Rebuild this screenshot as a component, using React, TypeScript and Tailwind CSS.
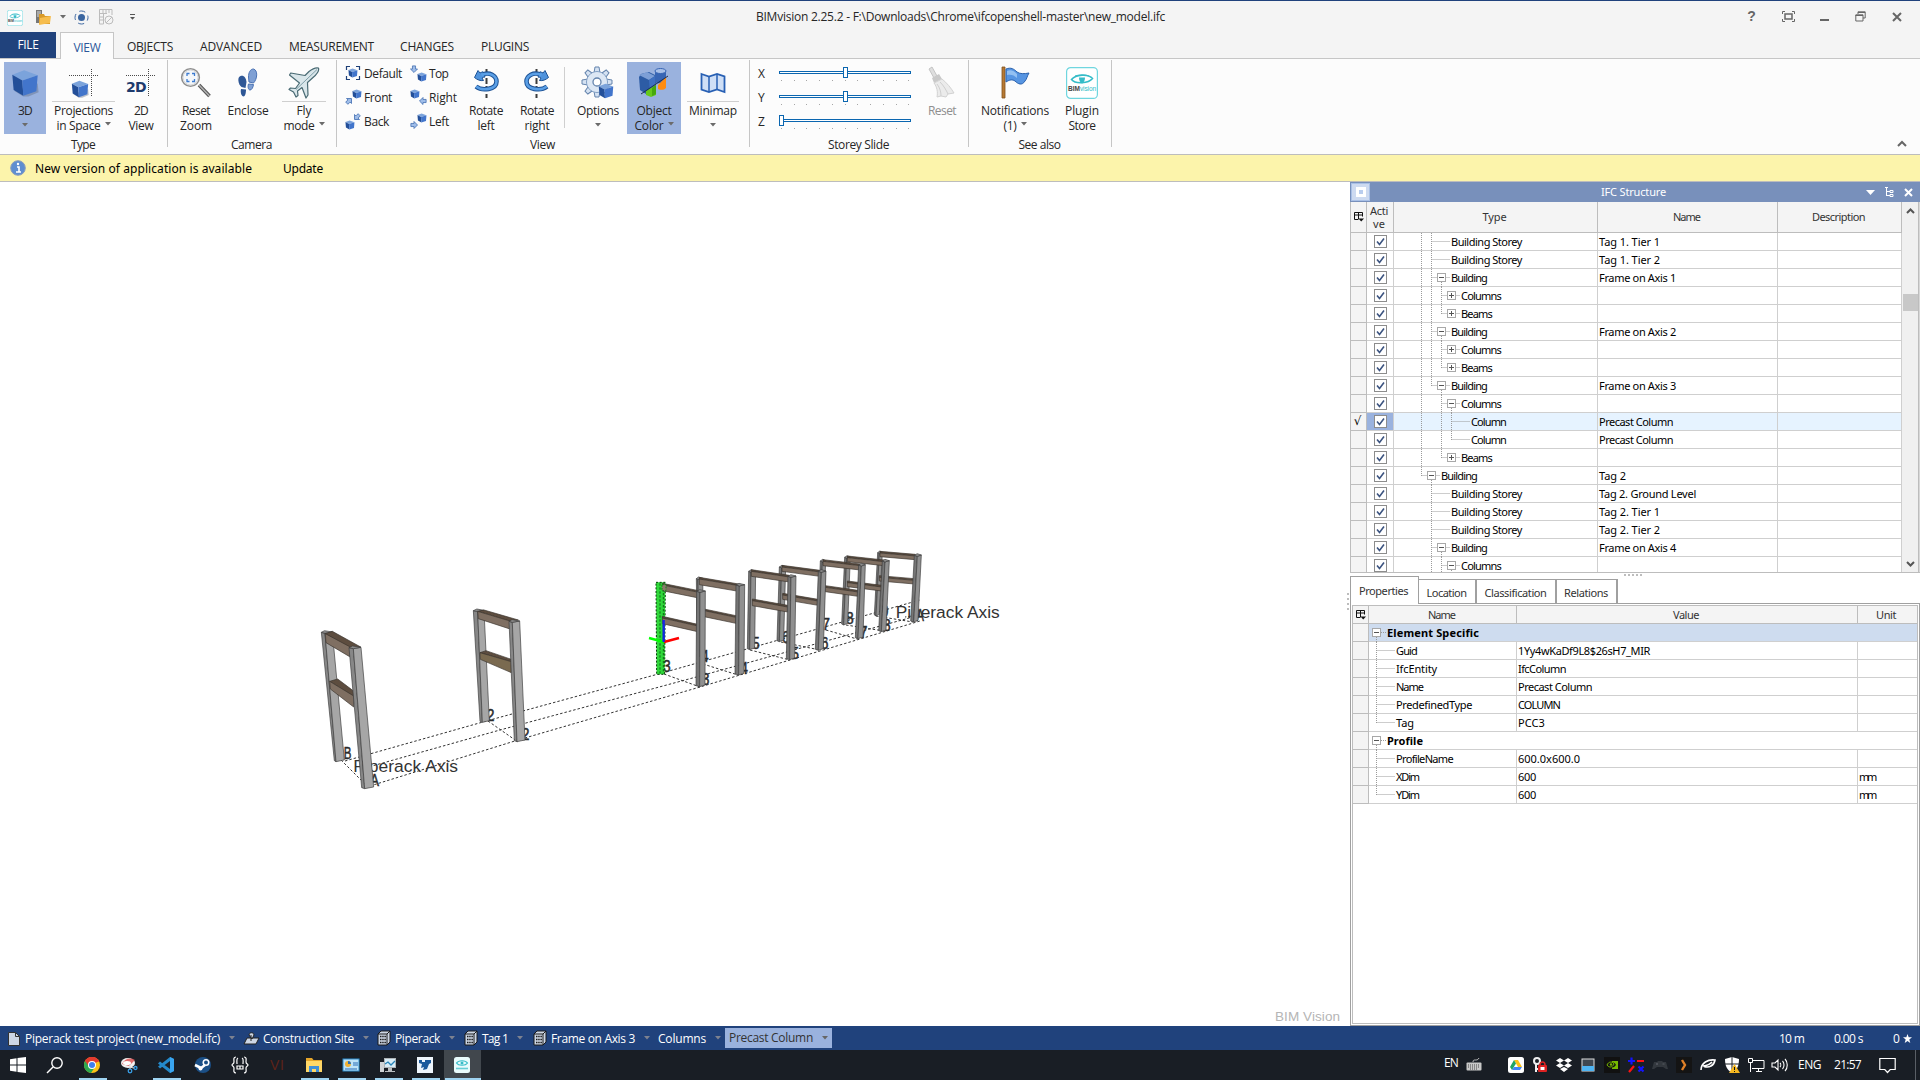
import { useLayoutEffect, useRef, useState } from 'react';
import type { ReactNode } from 'react';

/** Text run that adjusts its tracking to fill a known width. */
function T({ w, children, className = '' }: { w: number; children: string; className?: string }) {
  const ref = useRef<HTMLSpanElement>(null);
  const [ls, setLs] = useState(0);
  useLayoutEffect(() => {
    const el = ref.current;
    if (el) setLs((w - el.getBoundingClientRect().width) / children.length);
  }, []);
  return (
    <span ref={ref} className={'inline-block whitespace-pre ' + className} style={{ letterSpacing: ls }}>
      {children}
    </span>
  );
}

const Arrow = ({ className = 'text-[#6b6b6b]' }: { className?: string }) => (
  <svg width="6" height="4" viewBox="0 0 6 4" className={'shrink-0 ' + className}>
    <path d="M0 0h6L3 3.6z" fill="currentColor" />
  </svg>
);

const CubeFaces = () => (
  <>
    <path d="M1.500 6.500L15 1.500l15.500 5.500L13 13z" fill="#7ba3db" />
    <path d="M1.500 6.500L13 13l1 17.500L3 24z" fill="#234f99" />
    <path d="M13 13l17.500-6L29 25.500l-15 5z" fill="#4275cb" />
  </>
);

function Cube({ s = 16, className = '' }: { s?: number; className?: string }) {
  return (
    <svg width={s} height={s} viewBox="0 0 32 32" className={'shrink-0 ' + className}>
      <path d="M4 25l10 6.500h6l11.500-5-1-10z" fill="#5b6780" opacity=".4" />
      <CubeFaces />
    </svg>
  );
}

const Dotted = ({ children }: { children: ReactNode }) => (
  <div className="relative h-8 w-[32px]">
    <svg width="32" height="32" className="absolute inset-0">
      <path d="M1 8.500h30M23.500 2v28" stroke="#4a4a4a" strokeDasharray="1 1" />
    </svg>
    {children}
  </div>
);

function Btn({
  w, icon, a, aw, b, bw, arrow, ml = 'ml-0', active, line, dim,
}: {
  w: string; icon: ReactNode; a: string; aw: number; b?: string; bw?: number; arrow?: boolean; ml?: string;
  active?: boolean; line?: boolean; dim?: boolean;
}) {
  return (
    <div className={`relative flex h-[72px] shrink-0 flex-col items-center pt-[5px] ${w} ${ml} ${active ? 'bg-[#9ab2de]' : ''}`}>
      <div className="flex h-8 items-center justify-center">{icon}</div>
      {line && <div className="absolute top-[39px] h-px w-full bg-[#cfcfcf]" />}
      <div className={`mt-1 h-[15px] leading-[15px] ${dim ? 'text-[#8f8f8f]' : ''}`}><T w={aw}>{a}</T></div>
      <div className="flex h-[15px] items-center gap-[4px] leading-[15px]">
        {b && <T w={bw || 20}>{b}</T>}
        {arrow && <Arrow className={b ? 'mb-[3px] text-[#6b6b6b]' : 'mb-[2px] text-[#6b6b6b]'} />}
      </div>
    </div>
  );
}

function Group({ w, label, lw, children }: { w: string; label: string; lw: number; children: ReactNode }) {
  return (
    <div className={`relative flex h-[95px] shrink-0 flex-col ${w}`}>
      <div className="flex h-[76px] pt-[3px]">{children}</div>
      <div className="mt-[3px] flex justify-center pr-[2px] leading-[14px]"><T w={lw}>{label}</T></div>
      <div className="absolute right-0 top-[1px] h-[87px] w-px bg-[#c6c6c6]" />
    </div>
  );
}

const downArrow = 'M-2-4h4v4h2.500L0 4.500-4.500 0H-2z';

function ViewIcon({ k }: { k: string }) {
  const cubeAt: Record<string, [number, number]> = {
    Default: [3, 3], Front: [7, 0], Back: [0, 7], Top: [7, 7], Right: [0, 0], Left: [7, 0],
  };
  const arrowAt: Record<string, [number, number, number]> = {
    Front: [4, 12, 225], Back: [12, 4, 45], Top: [4, 4, 0], Right: [13, 12, 90], Left: [4, 12, -90],
  };
  const [x, y] = cubeAt[k];
  const ar = arrowAt[k];
  return (
    <svg width="18" height="18" viewBox="0 0 18 18" className="shrink-0">
      <g transform={`translate(${x} ${y}) scale(.31)`}><CubeFaces /></g>
      {k === 'Default' && (
        <path d="M1.500 5V1.500H5M11 1.500h3.500V5M14.500 11v3.500H11M5 14.500H1.500V11" fill="none" stroke="#1d3f77" strokeWidth="1.200" />
      )}
      {ar && (
        <path d={downArrow} transform={`translate(${ar[0]} ${ar[1]}) rotate(${ar[2]}) scale(.78)`} fill="#9fbde9" stroke="#3f6cb0" />
      )}
    </svg>
  );
}

const Small = ({ k, w }: { k: string; w: number }) => (
  <div className="flex h-6 items-center gap-px"><ViewIcon k={k} /><T w={w}>{k}</T></div>
);

const Rotate = ({ flip }: { flip?: boolean }) => (
  <svg width="32" height="32" viewBox="0 0 32 32" className={flip ? '-scale-x-100' : ''}>
    <path d="M16.500 2v5M16.500 11v6M16.500 19v2M16.500 27v4" stroke="#3c3c3c" strokeWidth="2" />
    <path d="M11 8C20 4 26.500 9 26.500 14.500c0 8-14 10-20.500 5" fill="none" stroke="#1d5295" strokeWidth="4.600" />
    <path d="M4.500 10.500L8 3.500l2 2.500c1-.5 2-1 3-1.200l2 5.200c-1 0-2 .5-3 1l1.500 2.500c-3 .5-6-.5-9-3z" fill="#4f93dd" stroke="#1d5295" strokeLinejoin="round" />
    <path d="M11.500 8C20 4.500 26.500 9 26.500 14.500c0 8-14 10-20.300 5" fill="none" stroke="#5a9fe6" strokeWidth="2.600" />
  </svg>
);

const gearTeeth = [0, 45, 90, 135, 180, 225, 270, 315];

const icons = {
  zoom: (
    <svg width="34" height="34" viewBox="0 0 34 34">
      <path d="M20 19l10.500 11" stroke="#565656" strokeWidth="3.600" />
      <path d="M20 19l10.500 11" stroke="#b4b4b4" strokeWidth="1.400" />
      <circle cx="11.500" cy="11.500" r="8.800" fill="#f4f7fa" stroke="#8f8f8f" strokeWidth="1.600" />
      <circle cx="11.500" cy="11.500" r="7.500" fill="none" stroke="#d5d5d5" />
      <path d="M8 10V7.500h2.500M13 7.500h2.500V10M15.500 13v2.500H13M10.500 15.500H8V13" fill="none" stroke="#3d7bd0" strokeWidth="1.300" />
    </svg>
  ),
  feet: (
    <svg width="22" height="32" viewBox="0 0 22 32">
      <path d="M3.500 9C7 8 9 11 9.500 15l-1 6-4-1C1 17 0 10 3.500 9z" fill="#2e5796" />
      <path d="M4 22l5 .5c0 4-1 7-2.500 7S3 26.500 4 22z" fill="#2e5796" />
      <path d="M16.500 2c-3.500 0-5 4-5 8l.5 5 4.500 1c4-4 4.500-13 0-14z" fill="#7fa0d4" stroke="#4a72b4" />
      <path d="M16.500 17.500l-5-.5c-1 3 0 6 1.500 6s3-2 3.500-5.500z" fill="#7fa0d4" stroke="#4a72b4" />
    </svg>
  ),
  plane: (
    <svg width="32" height="32" viewBox="0 0 32 32">
      <path d="M30.500 1c.8 2.500-1.500 6-5.500 9.500l-5.500 5 .5 12.500-2 3-4-10.500L9.500 24l.5 4.500-2 1.500-2.500-5L1 22.500 2.500 21l5 .5 4-5.500L1.500 8l1.200-2L17 8.500l4-4C24 2 28 .5 30.500 1z" fill="#d9e6ea" stroke="#4a6b74" strokeWidth="1.200" strokeLinejoin="round" />
      <path d="M29 2.500L8 22.500" stroke="#7f9ea8" />
    </svg>
  ),
  gear: (
    <svg width="34" height="34" viewBox="0 0 34 34">
      <g transform="translate(16 16)">
        {gearTeeth.map((a) => (
          <path key={a} d="M-3-9l1-6h4L3-9z" transform={`rotate(${a})`} fill="#d5e2f2" stroke="#6484ad" />
        ))}
        <circle r="10.500" fill="#d9e5f3" stroke="#7f9dc2" />
        <circle r="9.800" fill="#dce7f4" />
        <circle r="4" fill="#fff" stroke="#6484ad" strokeWidth="1.300" />
      </g>
      <g transform="translate(17 17) scale(.5)"><CubeFaces /></g>
    </svg>
  ),
  objColor: (
    <svg width="32" height="34" viewBox="0 0 32 34">
      <path d="M1 11l2-3 8-2 8 4-2 13-9 5-6-4z" fill="#2d5ca5" />
      <path d="M1 9l8-3 8 4-6 4z" fill="#7d9fd6" />
      <path d="M11 14l6-4v13l-5 4z" fill="#3e70c0" />
      <path d="M17 5v11c2 2 9 2 11-3V5z" fill="#3765b4" />
      <path d="M28 11l-8 8v4c3 1.500 6 1 8-1z" fill="#ff8c10" />
      <ellipse cx="22.500" cy="5" rx="5.500" ry="2.500" fill="#a8c0e8" stroke="#3765b4" />
      <path d="M8 25l10-6v10l-5 2-5-2z" fill="#66c81a" />
      <path d="M14 22l4-3v9l-4 2z" fill="#46a80c" />
      <path d="M3 28L30 10" stroke="#1d2f4f" />
    </svg>
  ),
  map: (
    <svg width="26" height="26" viewBox="0 0 26 26">
      <path d="M1.500 4l7.500 2.500L17 4l7.500 2.500V22L17 19.500 9 22l-7.500-2.500z" fill="#cfdff6" stroke="#2860b4" strokeWidth="1.800" />
      <path d="M9 6.500V22M17 4v15.500" stroke="#2860b4" strokeWidth="1.500" />
    </svg>
  ),
  broom: (
    <svg width="32" height="34" viewBox="0 0 32 34">
      <path d="M3 3l3-2 5 9-3 2z" fill="#dedede" stroke="#c4c4c4" />
      <path d="M6 12l7-4 3 5-8 4z" fill="#c9c9c9" />
      <path d="M8 17l8-4c5 4 9 9 12 14l-6 1-2 3-5-1-4 1c1-5 0-10-3-14z" fill="#ebebeb" stroke="#d2d2d2" />
      <path d="M11 18c3 4 4 8 4 12M14 16c4 4 6 8 8 12" fill="none" stroke="#cfcfcf" />
    </svg>
  ),
  flag: (
    <svg width="32" height="34" viewBox="0 0 32 34">
      <path d="M3 1h3v31H3z" fill="#b77a34" stroke="#80501c" strokeWidth=".8" />
      <path d="M7 3c5-2 8 0 11 3 3 2 7 2 12 1-2 3-2 6-4 8-3 5-7 3-10 0-3-2-6-1-9 1z" fill="#5795e2" stroke="#2b62ad" />
      <path d="M8 5c4-2 7 0 10 3v4c-3-3-6-4-10-3z" fill="#93c0f2" />
    </svg>
  ),
};

function Logo({ s }: { s: number }) {
  return (
    <svg width={s} height={s} viewBox="0 0 32 32" className="shrink-0">
      <rect x=".6" y=".6" width="30.800" height="30.800" rx="4" fill="#fff" stroke="#6fd6df" strokeWidth="1.200" />
      <path d="M5.500 12.500c4-5 17-6 21-1-4 5-17 6-21 1z" fill="none" stroke="#35bcc8" strokeWidth="1.600" />
      <path d="M9 9c4-1.500 10-1.500 14 0" fill="none" stroke="#35bcc8" />
      <path d="M13 10.500h6c0 3-1 5-3 6-2-1-3-3-3-6z" fill="#35bcc8" />
      <text x="2" y="24" fontSize="6.500" fontWeight="700" fontFamily="Liberation Sans, sans-serif" textLength="12" fill="#444">BIM</text>
      <text x="14" y="24" fontSize="6.500" fontFamily="Liberation Sans, sans-serif" textLength="16" fill="#35bcc8">vision</text>
    </svg>
  );
}

const ticks = [2, 15, 27, 40, 53, 66, 78, 91, 104, 117, 129];

function Slider({ label, pos }: { label: string; pos: number }) {
  return (
    <div className="flex h-6 items-center">
      <span className="w-[21px]">{label}</span>
      <svg width="132" height="20" viewBox="0 0 132 20">
        <rect x=".5" y="7.500" width="131" height="2" fill="#fff" stroke="#0b66b0" />
        <rect x={pos + 0.5} y="3.500" width="4" height="10" fill="#fff" stroke="#0b66b0" />
        {ticks.map((t) => <rect key={t} x={t} y="16" width="1" height="1" fill="#a6a6a6" />)}
      </svg>
    </div>
  );
}

function TitleBar() {
  return (
    <div className="relative flex h-[32px] items-center border-t border-[#20427c]">
      <div className="ml-[7px] mt-[2px]"><Logo s={16} /></div>
      <svg width="17" height="17" viewBox="0 0 17 17" className="ml-[12px] mt-px">
        <path d="M1 1h6v13H1z" fill="#777" /><path d="M2 3h4M2 5h4M2 7h4" stroke="#ddd" />
        <path d="M4 5h5l1 2h5v8H4z" fill="#d99a28" /><path d="M5 9l11-2-1 7-11 2z" fill="#f6bd4e" />
      </svg>
      <span className="ml-[8px]"><Arrow /></span>
      <svg width="15" height="15" viewBox="0 0 15 15" className="ml-[8px] mt-px">
        <circle cx="7.500" cy="7.500" r="3.500" fill="#3a65a0" />
        <circle cx="7.500" cy="7.500" r="6.500" fill="none" stroke="#3a65a0" strokeDasharray="6.200 4" strokeDashoffset="3" />
      </svg>
      <svg width="15" height="16" viewBox="0 0 15 16" className="ml-[10px]" fill="none" stroke="#bcbcbc">
        <path d="M.5 15V.5H13V6M.5 4.500H8M4.500 5v10H.5M4 1v3M7 1v3M10 1v3M1 8h3M1 11h3" />
        <circle cx="10" cy="11" r="4" /><path d="M7 14l6-6" />
      </svg>
      <svg width="6" height="8" viewBox="0 0 6 8" className="ml-[16px]"><path d="M0 1.500h5" stroke="#555" /><path d="M0 4h5L2.500 6.800z" fill="#555" /></svg>
      <div className="absolute left-[756px] top-[7px] leading-[18px]"><T w={409}>BIMvision 2.25.2 - F:\Downloads\Chrome\ifcopenshell-master\new_model.ifc</T></div>
      <div className="ml-auto flex items-center pr-[18px] text-[#666]">
        <span className="w-[9px] text-center font-['Liberation_Sans',sans-serif] text-[14px] font-bold">?</span>
        <svg width="13" height="11" viewBox="0 0 13 11" className="ml-[26px]" fill="none" stroke="#666">
          <path d="M.5 3V.5H3M10 .5h2.500V3M12.500 8v2.500H10M3 10.500H.5V8" /><rect x="3" y="3" width="7" height="5" strokeWidth="1.500" />
        </svg>
        <span className="ml-[25px] mt-[6px] h-[2px] w-[9px] bg-[#666]" />
        <svg width="11" height="11" viewBox="0 0 11 11" className="ml-[26px]" fill="none" stroke="#666">
          <path d="M3 3V.8h7.200V7H8M3 1.500h7" /><path d="M.8 3.800H8V10H.8zM.5 4.500H8" />
        </svg>
        <svg width="10" height="10" viewBox="0 0 10 10" className="ml-[26px]"><path d="M1 1l8 8M9 1L1 9" stroke="#666" strokeWidth="2" /></svg>
      </div>
    </div>
  );
}

function Tabs() {
  return (
    <div className="flex h-[27px] items-end border-b border-[#c6c6c6] pt-px leading-[22px]">
      <div className="flex h-[26px] w-[56px] justify-center bg-[#20427c] pt-px leading-[24px] text-white"><T w={21}>FILE</T></div>
      <div className="-mb-px ml-1 flex h-[27px] w-[54px] justify-center border border-b-0 border-[#c6c6c6] bg-[#fcfcfc] pt-[4px] text-[#2b579a]"><T w={27}>VIEW</T></div>
      <T w={46} className="ml-[13px]">OBJECTS</T>
      <T w={62} className="ml-[27px]">ADVANCED</T>
      <T w={85} className="ml-[27px]">MEASUREMENT</T>
      <T w={54} className="ml-[26px]">CHANGES</T>
      <T w={48} className="ml-[27px]">PLUGINS</T>
    </div>
  );
}

function Ribbon() {
  return (
    <div className="relative flex h-[95px] bg-[#fcfcfc]">
      <Group w="w-[168px]" label="Type" lw={24}>
        <Btn ml="ml-1" w="w-[42px]" active arrow icon={<Cube s={28} />} a="3D" aw={14} />
        <Btn ml="ml-[6px]" w="w-[63px]" line arrow a="Projections" aw={59} b="in Space" bw={44}
          icon={<Dotted><Cube s={18} className="absolute left-[3px] top-[13px]" /></Dotted>} />
        <Btn ml="ml-[3px]" w="w-[46px]" a="2D" aw={14} b="View" bw={25}
          icon={<Dotted><span className="absolute left-[1px] top-[11px] font-['DejaVu_Sans',sans-serif] text-[14px] font-bold leading-[18px] text-[#1d3a6d]"><T w={20}>2D</T></span></Dotted>} />
      </Group>
      <Group w="w-[169px]" label="Camera" lw={41}>
        <Btn ml="ml-[3px]" w="w-[50px]" icon={icons.zoom} a="Reset" aw={28} b="Zoom" bw={32} />
        <Btn ml="ml-px" w="w-[52px]" icon={icons.feet} a="Enclose" aw={41} />
        <Btn ml="ml-[8px]" w="w-[44px]" line icon={icons.plane} a="Fly" aw={15} b="mode" bw={31} arrow />
      </Group>
      <Group w="w-[413px]" label="View" lw={25}>
        <div className="ml-[8px] w-[64px]"><Small k="Default" w={38} /><Small k="Front" w={28} /><Small k="Back" w={25} /></div>
        <div className="ml-[1px] w-[52px]"><Small k="Top" w={19} /><Small k="Right" w={28} /><Small k="Left" w={20} /></div>
        <Btn w="w-[48px]" icon={<Rotate />} a="Rotate" aw={34} b="left" bw={17} />
        <Btn ml="ml-[3px]" w="w-[48px]" icon={<Rotate flip />} a="Rotate" aw={34} b="right" bw={25} />
        <div className="ml-[3px] mt-[5px] h-[61px] w-px bg-[#cfcfcf]" />
        <Btn ml="ml-[5px]" w="w-[56px]" icon={icons.gear} a="Options" aw={42} arrow />
        <Btn ml="ml-px" w="w-[54px]" active icon={icons.objColor} a="Object" aw={35} b="Color" bw={29} arrow />
        <Btn ml="ml-[6px]" w="w-[52px]" line icon={icons.map} a="Minimap" aw={48} arrow />
      </Group>
      <Group w="w-[219px]" label="Storey Slide" lw={61}>
        <div className="ml-[8px]"><Slider label="X" pos={64} /><Slider label="Y" pos={64} /><Slider label="Z" pos={0} /></div>
        <Btn ml="ml-[9px]" w="w-[44px]" dim icon={icons.broom} a="Reset" aw={28} />
      </Group>
      <Group w="w-[143px]" label="See also" lw={42}>
        <Btn ml="ml-[8px]" w="w-[76px]" icon={icons.flag} a="Notifications" aw={68} b="(1)" bw={13} arrow />
        <Btn ml="ml-[9px]" w="w-[40px]" icon={<Logo s={32} />} a="Plugin" aw={34} b="Store" bw={27} />
      </Group>
      <svg width="10" height="7" viewBox="0 0 10 7" className="absolute bottom-[7px] right-[13px]"><path d="M1 6l4-4 4 4" fill="none" stroke="#666" strokeWidth="2" /></svg>
    </div>
  );
}

/* ---------- 3D view ---------- */

type ColumnDef = { t: [number, number, number]; y: number; b: [number, number, number]; by: number; light?: boolean };

/** Column with a shaded side (left) and a face (right). */
function Column({ t, y, b, by, light }: ColumnDef) {
  return (
    <g stroke="#3c3c3c" strokeWidth="2" strokeLinejoin="round">
      <path d={`M${t[0]} ${y + 3}L${t[1]} ${y + 6}L${b[1]} ${by}L${b[0]} ${by - 3}z`} fill={light ? '#878787' : '#757575'} />
      <path d={`M${t[1]} ${y + 6}L${t[2]} ${y + 2}L${b[2]} ${by - 5}L${b[1]} ${by}z`} fill={light ? '#a6a6a6' : '#909090'} />
      <path d={`M${t[0]} ${y + 3}L${(t[0] + t[1]) / 2 + 4} ${y - 2}L${t[2]} ${y + 2}L${t[1]} ${y + 6}z`} fill="#8d8d8d" />
    </g>
  );
}

function Beam({ x1, y1, x2, y2, h, lip = 5 }: { x1: number; y1: number; x2: number; y2: number; h: number; lip?: number }) {
  return (
    <g stroke="#3a342e" strokeWidth="2" strokeLinejoin="round">
      <path d={`M${x1} ${y1}L${x2} ${y2}L${x2} ${y2 + lip}L${x1} ${y1 + lip}z`} fill="#5d4d3f" />
      <path d={`M${x1} ${y1 + lip}L${x2} ${y2 + lip}L${x2} ${y2 + h}L${x1} ${y1 + h}z`} fill="#7f6f62" />
    </g>
  );
}

const Num = ({ x, y, children }: { x: number; y: number; children: string }) => (
  <text x={x} y={y} fontSize="48" fill="#2b2b2b" stroke="#2b2b2b" strokeWidth="1.500" textLength="23" lengthAdjust="spacingAndGlyphs">{children}</text>
);

function Scene() {
  return (
    <svg width="1350" height="844" viewBox="0 182 1350 844" fontFamily="Liberation Sans, sans-serif">
      <g fill="none" stroke="#333" strokeWidth="1" strokeDasharray="2.500 2">
        <path d="M345 761L490 720L662 673L920 600" />
        <path d="M365 768L500 730L700 676L920 615L905 617" />
        <path d="M370 786L518 740L700 687L920 621" />
        <path d="M341 760L367 786M488 721L518 742M664 674L700 687M703 664L738 675M750 650L790 660M781 642L820 650M826 630L857 639M846 625L884 631M876 616L913 622" />
      </g>
      <g transform="translate(300 580) scale(.33333)">
        <Num x={131} y={538}>B</Num>
        <text x="160" y="577" fontSize="51" fill="#333" textLength="314" lengthAdjust="spacingAndGlyphs">Piperack Axis</text>
        <text x="210" y="619" fontSize="50" fill="#2b2b2b" stroke="#2b2b2b" strokeWidth="1.500" textLength="27" lengthAdjust="spacingAndGlyphs">A</text>
        <Num x={560} y={423}>2</Num>
        <Num x={665} y={481}>2</Num>
        <Column t={[64, 75, 97]} y={154} b={[103, 108, 133]} by={545} light />
        <path d="M76 161L97 154L182 201L148 205z" fill="#5d4d3f" stroke="#3a342e" strokeWidth="2" />
        <path d="M76 161L149 200V230L78 188z" fill="#7f6f62" stroke="#3a342e" strokeWidth="2" />
        <path d="M89 304L113 297L162 334V350z" fill="#5d4d3f" stroke="#3a342e" strokeWidth="2" />
        <path d="M89 304L161 348V381L91 327z" fill="#7f6f62" stroke="#3a342e" strokeWidth="2" />
        <Column t={[147, 160, 183]} y={200} b={[185, 194, 221]} by={626} light />
        <Column t={[520, 533, 552]} y={89} b={[540, 547, 568]} by={427} light />
        <path d="M533 94L552 90L655 120L630 124z" fill="#5d4d3f" stroke="#3a342e" strokeWidth="2" />
        <path d="M533 94L630 123V147L535 116z" fill="#7f6f62" stroke="#3a342e" strokeWidth="2" />
        <path d="M540 218L558 212L634 238V246z" fill="#5d4d3f" stroke="#3a342e" strokeWidth="2" />
        <path d="M540 218L634 245V278L541 238z" fill="#7a6a50" stroke="#3a342e" strokeWidth="2" />
        <Column t={[627, 637, 659]} y={121} b={[643, 651, 675]} by={485} light />
      </g>
      <g transform="translate(630 530) scale(.33333)">
        <Num x={99} y={427}>3</Num><Num x={215} y={466}>3</Num>
        <Num x={213} y={396}>4</Num><Num x={331} y={431}>4</Num>
        <Num x={366} y={357}>5</Num><Num x={484} y={386}>5</Num>
        <Num x={456} y={338}>6</Num><Num x={572} y={358}>6</Num>
        <Num x={577} y={300}>7</Num><Num x={689} y={323}>7</Num>
        <Num x={648} y={282}>8</Num><Num x={759} y={302}>8</Num>
        <Num x={752} y={262}>9</Num><Num x={859} y={274}>A</Num>
        <text x="797" y="265" fontSize="51" fill="#333" textLength="312" lengthAdjust="spacingAndGlyphs">Piperack Axis</text>
        <Column t={[743, 748, 757]} y={65} b={[733, 738, 748]} by={258} />
        <Beam x1={750} y1={64} x2={856} y2={73} h={16} />
        <Beam x1={748} y1={137} x2={853} y2={146} h={16} />
        <Column t={[853, 862, 874]} y={73} b={[842, 851, 864]} by={276} />
        <Column t={[644, 650, 661]} y={79} b={[635, 641, 653]} by={285} />
        <Beam x1={652} y1={78} x2={762} y2={90} h={17} />
        <Beam x1={652} y1={153} x2={755} y2={166} h={17} />
        <Column t={[757, 765, 778]} y={90} b={[746, 754, 768]} by={305} />
        <Column t={[571, 577, 587]} y={90} b={[563, 570, 580]} by={304} />
        <Beam x1={579} y1={89} x2={690} y2={102} h={18} />
        <Beam x1={586} y1={167} x2={684} y2={181} h={18} />
        <Column t={[686, 694, 706]} y={102} b={[676, 684, 699]} by={326} />
        <Column t={[448, 455, 467]} y={108} b={[441, 448, 461]} by={335} />
        <Beam x1={456} y1={106} x2={570} y2={121} h={18} />
        <Beam x1={458} y1={190} x2={564} y2={208} h={18} />
        <Column t={[565, 574, 588]} y={121} b={[556, 565, 580]} by={361} />
        <Column t={[356, 363, 377]} y={121} b={[352, 359, 374]} by={359} />
        <Beam x1={364} y1={119} x2={478} y2={136} h={20} />
        <Beam x1={367} y1={207} x2={473} y2={226} h={20} />
        <Column t={[474, 483, 498]} y={136} b={[469, 479, 494]} by={389} />
        <Column t={[199, 204, 218]} y={143} b={[202, 208, 222]} by={380} />
        <Beam x1={208} y1={142} x2={326} y2={162} h={22} />
        <Beam x1={222} y1={237} x2={318} y2={257} h={23} />
        <Column t={[318, 328, 344]} y={162} b={[315, 326, 342]} by={435} />
        <path d="M78 157h28l-2 276H80z" fill="#2fd83a" stroke="#063f0a" strokeWidth="3" strokeDasharray="6 5" />
        <path d="M90 160v270M100 165v265" stroke="#0b6612" strokeWidth="3" strokeDasharray="7 5" />
        <Beam x1={97} y1={160} x2={206} y2={182} h={22} />
        <Beam x1={97} y1={259} x2={203} y2={283} h={22} />
        <path d="M96 164h12v18H96z" fill="#8b7a6c" stroke="#0b8a14" strokeWidth="3" strokeDasharray="5 4" />
        <Column t={[200, 210, 226]} y={181} b={[198, 209, 225]} by={470} />
        <path d="M57 324l45 12" stroke="#0f0" strokeWidth="7" />
        <path d="M102 336l45-12" stroke="#f00" strokeWidth="8" />
        <path d="M101 336V270" stroke="#1425e6" strokeWidth="7" />
      </g>
      <text x="1275" y="1021" fontSize="13.500" fill="#b5b5b5" textLength="65">BIM Vision</text>
    </svg>
  );
}

/* ---------- Side panels ---------- */

type Row = { l: number; t: string; w: number; n?: string; nw?: number; box?: '+' | '-'; v: number[]; end?: boolean; sel?: boolean };

const S = { t: 'Building Storey', w: 71 };
const B = { t: 'Building', w: 36 };
const C = { t: 'Columns', w: 40 };
const M = { t: 'Beams', w: 31 };
const rows: Row[] = [
  { l: 1, ...S, n: 'Tag 1. Tier 1', nw: 61, v: [0, 1] },
  { l: 1, ...S, n: 'Tag 1. Tier 2', nw: 61, v: [0, 1] },
  { l: 1, ...B, n: 'Frame on Axis 1', nw: 77, box: '-', v: [0, 1] },
  { l: 2, ...C, box: '+', v: [0, 1, 2] },
  { l: 2, ...M, box: '+', v: [0, 1], end: true },
  { l: 1, ...B, n: 'Frame on Axis 2', nw: 77, box: '-', v: [0, 1] },
  { l: 2, ...C, box: '+', v: [0, 1, 2] },
  { l: 2, ...M, box: '+', v: [0, 1], end: true },
  { l: 1, ...B, n: 'Frame on Axis 3', nw: 77, box: '-', v: [0], end: true },
  { l: 2, ...C, box: '-', v: [0, 2] },
  { l: 3, t: 'Column', w: 35, n: 'Precast Column', nw: 74, v: [0, 2, 3], sel: true },
  { l: 3, t: 'Column', w: 35, n: 'Precast Column', nw: 74, v: [0, 2], end: true },
  { l: 2, ...M, box: '+', v: [0], end: true },
  { l: 0, ...B, n: 'Tag 2', nw: 27, box: '-', v: [], end: true },
  { l: 1, ...S, n: 'Tag 2. Ground Level', nw: 97, v: [1] },
  { l: 1, ...S, n: 'Tag 2. Tier 1', nw: 61, v: [1] },
  { l: 1, ...S, n: 'Tag 2. Tier 2', nw: 61, v: [1] },
  { l: 1, ...B, n: 'Frame on Axis 4', nw: 77, box: '-', v: [1] },
  { l: 2, ...C, box: '-', v: [1, 2] },
];

const Box = ({ x, k }: { x: number; k: '+' | '-' }) => (
  <g stroke="#a8a8a8">
    <rect x={x - 4} y="4.500" width="8" height="8" fill="#fff" />
    <path d={k === '+' ? `M${x - 2.5} 8.500h5M${x} 6v5` : `M${x - 2.5} 8.500h5`} stroke="#555" />
  </g>
);

function Guides({ r }: { r: Row }) {
  const gx = (l: number) => 27.5 + 10 * l;
  return (
    <svg width={47 + 10 * r.l} height="18" className="shrink-0">
      <g stroke="#9a9a9a" strokeDasharray="1 1">
        {r.v.map((l) => <path key={l} d={`M${gx(l)} 0v18`} />)}
        {r.end && <path d={`M${gx(r.l)} 0v9`} />}
        <path d={`M${gx(r.l)} 8.500H${46 + 10 * r.l}`} />
        {r.box === '-' && <path d={`M${gx(r.l + 1)} 13v5`} />}
      </g>
      {r.box && <Box x={gx(r.l + 1)} k={r.box} />}
    </svg>
  );
}

const Check = () => (
  <svg width="13" height="13" viewBox="0 0 13 13">
    <rect x=".5" y=".5" width="12" height="12" fill="#fff" stroke="#8c8c8c" />
    <path d="M3 6.500l2.500 3L10 3.500" fill="none" stroke="#3c5480" strokeWidth="1.600" />
  </svg>
);

const GridIcon = () => (
  <svg width="10" height="10" viewBox="0 0 10 10">
    <path d="M4 7.500H.5v-7h8v4M.5 3h8M4.500 .5v7" fill="none" stroke="#111" /><path d="M4.500 6.500h5.500L7.200 9.500z" fill="#111" />
  </svg>
);

const hd = 'flex items-center justify-center border-r border-[#bdbdbd] pr-[2px]';

function Structure() {
  return (
    <div className="flex h-[391px] flex-col border-b border-[#bdbdbd]">
      <div className="flex h-[20px] shrink-0 items-center bg-[#7890bb] text-white">
        <div className="ml-px flex h-[18px] w-[19px] items-center justify-center border border-[#a9c0e6] bg-[#cddaf0]">
          <div className="h-[10px] w-[10px] border-[3px] border-white bg-[#b9cdee]" />
        </div>
        <div className="ml-[231px]"><T w={65}>IFC Structure</T></div>
        <svg width="9" height="5" viewBox="0 0 9 5" className="ml-auto"><path d="M0 0h9L4.500 5z" fill="#fff" /></svg>
        <svg width="9" height="10" viewBox="0 0 9 10" className="ml-[10px]" fill="none" stroke="#fff"><path d="M0 .5h3M1.500 1v8M1.500 4.500H5M1.500 8.500H5" /><path d="M5 3.500h3v2H5zM5 7.500h3v2H5z" /></svg>
        <svg width="9" height="9" viewBox="0 0 9 9" className="ml-[10px] mr-[7px]"><path d="M1 1l7 7M8 1L1 8" stroke="#fff" strokeWidth="2" /></svg>
      </div>
      <div className="flex min-h-0 flex-1">
        <div className="w-[552px] shrink-0 overflow-hidden border-l border-[#bdbdbd]">
          <div className="flex h-[31px] border-b border-[#bdbdbd] bg-[#f4f4f4] text-[#333]">
            <div className={hd + ' w-[16px] pl-[2px]'}><GridIcon /></div>
            <div className={hd + ' w-[27px] flex-col leading-[13px]'}><T w={18}>Acti</T><T w={12}>ve</T></div>
            <div className={hd + ' w-[204px]'}><T w={24}>Type</T></div>
            <div className={hd + ' w-[180px]'}><T w={27}>Name</T></div>
            <div className={hd + ' w-[124px]'}><T w={53}>Description</T></div>
          </div>
          {rows.map((r, i) => (
            <div key={i} className={`flex h-[18px] leading-[17px] ${r.sel ? 'bg-[#e6f3ff]' : 'bg-white'}`}>
              <div className="w-[16px] shrink-0 border-b border-r border-[#bdbdbd] bg-[#f4f4f4] pr-[2px] text-center font-['DejaVu_Sans',sans-serif] text-[12px]">{r.sel ? '√' : ''}</div>
              <div className={`flex w-[27px] shrink-0 items-center justify-center border-b border-r border-[#cfcfcf] ${r.sel ? 'bg-[#9ab2de]' : ''}`}><Check /></div>
              <div className="flex w-[204px] shrink-0 border-b border-r border-[#cfcfcf]"><Guides r={r} /><T w={r.w}>{r.t}</T></div>
              <div className="w-[180px] shrink-0 border-b border-r border-[#cfcfcf] pl-[1px]">{r.n && <T w={r.nw || 0}>{r.n}</T>}</div>
              <div className="w-[124px] shrink-0 border-b border-r border-[#cfcfcf]" />
            </div>
          ))}
        </div>
        <div className="flex w-[17px] flex-col items-center border-r border-[#bdbdbd] bg-[#f0f0f0] pb-[5px] pt-[6px]">
          <svg width="9" height="6" viewBox="0 0 9 6"><path d="M1 5l3.500-3.500L8 5" fill="none" stroke="#555" strokeWidth="2" /></svg>
          <div className="mt-[80px] h-[17px] w-[15px] bg-[#c8c8c8]" />
          <svg width="9" height="6" viewBox="0 0 9 6" className="mt-auto"><path d="M1 1l3.500 3.500L8 1" fill="none" stroke="#555" strokeWidth="2" /></svg>
        </div>
        <div className="w-px bg-[#d8d8d8]" />
      </div>
    </div>
  );
}

type Prop = { g?: string; t?: string; w: number; v?: string; vw?: number; u?: string; end?: boolean; hi?: boolean };
const props: Prop[] = [
  { g: 'Element Specific', w: 92, hi: true },
  { t: 'Guid', w: 21, v: '1Yy4wKaDf9L8$26sH7_MIR', vw: 132 },
  { t: 'IfcEntity', w: 41, v: 'IfcColumn', vw: 48 },
  { t: 'Name', w: 27, v: 'Precast Column', vw: 74 },
  { t: 'PredefinedType', w: 76, v: 'COLUMN', vw: 42 },
  { t: 'Tag', w: 18, v: 'PCC3', vw: 27, end: true },
  { g: 'Profile', w: 36 },
  { t: 'ProfileName', w: 57, v: '600.0x600.0', vw: 62 },
  { t: 'XDim', w: 23, v: '600', vw: 18, u: 'mm' },
  { t: 'YDim', w: 23, v: '600', vw: 18, u: 'mm', end: true },
];

function Properties() {
  const tab = 'flex h-[24px] items-center justify-center border-r-2 border-t border-[#a0a0a0] bg-white pr-px pt-[3px]';
  return (
    <div className="flex h-[450px] flex-col text-[#333]">
      <div className="flex h-[27px] shrink-0 items-end">
        <div className="relative z-10 -mb-px flex h-[28px] w-[69px] items-center justify-center border border-b-0 border-[#a0a0a0] bg-white pr-[2px] pt-[2px]"><T w={49}>Properties</T></div>
        <div className={tab + ' w-[58px]'}><T w={40}>Location</T></div>
        <div className={tab + ' w-[80px]'}><T w={62}>Classification</T></div>
        <div className={tab + ' w-[61px] border-r'}><T w={44}>Relations</T></div>
      </div>
      <div className="min-h-0 flex-1 border border-[#a0a0a0] bg-white p-px">
        <div className="h-full border border-[#bdbdbd] text-black">
          <div className="flex h-[18px] border-b border-[#bdbdbd] bg-[#f4f4f4] text-[#333]">
            <div className={hd + ' w-[16px] pl-[2px]'}><GridIcon /></div>
            <div className={hd + ' w-[148px] pt-px'}><T w={27}>Name</T></div>
            <div className={hd + ' w-[341px] pt-px'}><T w={26}>Value</T></div>
            <div className="flex flex-1 items-center justify-center pr-[3px] pt-px"><T w={20}>Unit</T></div>
          </div>
          {props.map((p, i) => (
            <div key={i} className={`flex h-[18px] leading-[17px] ${p.hi ? 'bg-[#cedcef]' : ''}`}>
              <div className="w-[16px] shrink-0 border-b border-r border-[#bdbdbd] bg-[#f4f4f4]" />
              {p.g ? (
                <div className="flex flex-1 border-b border-[#cfcfcf] font-bold">
                  <svg width="18" height="18" className="shrink-0">
                    <path d="M7.500 13v5M12 8.500h6" stroke="#9a9a9a" strokeDasharray="1 1" /><Box x={7.5} k="-" />
                  </svg>
                  <T w={p.w}>{p.g}</T>
                </div>
              ) : (
                <>
                  <div className="flex w-[148px] shrink-0 border-b border-r border-[#cfcfcf]">
                    <svg width="27" height="18" className="shrink-0"><path d={p.end ? 'M7.500 0v9M7.500 8.500H26' : 'M7.500 0v18M7.500 8.500H26'} fill="none" stroke="#9a9a9a" strokeDasharray="1 1" /></svg>
                    <T w={p.w}>{p.t || ''}</T>
                  </div>
                  <div className="w-[341px] shrink-0 border-b border-r border-[#cfcfcf] pl-[1px]"><T w={p.vw || 0}>{p.v || ''}</T></div>
                  <div className="flex-1 border-b border-[#cfcfcf] pl-[1px]">{p.u && <T w={16}>{p.u}</T>}</div>
                </>
              )}
            </div>
          ))}
        </div>
      </div>
    </div>
  );
}

/* ---------- Status bar and taskbar ---------- */

const Bld = ({ className }: { className: string }) => (
  <svg width="14" height="16" viewBox="0 0 14 16" className={'shrink-0 ' + className}>
    <path d="M1 4l3-3h9v11l-3 3H1z" fill="#cdd6e4" stroke="#1a1a1a" />
    <path d="M1 4h9v11M10 4l3-3" fill="none" stroke="#1a1a1a" />
    <path d="M3 6.500h6M3 9.500h6M3 12.500h6" stroke="#1a1a1a" strokeWidth="1.500" strokeDasharray="1.500 .7" />
  </svg>
);

const Crumb = ({ w, ml, children }: { w: number; ml: string; children: string }) => (
  <>
    <T w={w} className={ml + ' mt-px'}>{children}</T>
    <span className="ml-[9px]"><Arrow className="text-[#7d8290]" /></span>
  </>
);

function StatusBar() {
  return (
    <div className="flex h-[24px] shrink-0 items-center bg-[#20427c] text-[12px] leading-[18px] text-white">
      <svg width="12" height="14" viewBox="0 0 12 14" className="ml-[8px] mt-px"><path d="M.5.5h7l4 4v9H.5z" fill="#cdd6e4" stroke="#333" /><path d="M7.500.5v4h4" fill="none" stroke="#333" /></svg>
      <Crumb w={195} ml="ml-[5px]">Piperack test project (new_model.ifc)</Crumb>
      <svg width="17" height="14" viewBox="0 0 17 14" className="ml-[8px]"><path d="M4 7h12l-3 6H1z" fill="#cdd6e4" stroke="#222" /><path d="M8 10V4M6 4c0-3 5-3 5 0l-2 4z" fill="#cdd6e4" stroke="#222" /></svg>
      <Crumb w={91} ml="ml-[3px]">Construction Site</Crumb>
      <Bld className="ml-[8px]" />
      <Crumb w={45} ml="ml-[4px]">Piperack</Crumb>
      <Bld className="ml-[9px]" />
      <Crumb w={26} ml="ml-[4px]">Tag 1</Crumb>
      <Bld className="ml-[10px]" />
      <Crumb w={84} ml="ml-[4px]">Frame on Axis 3</Crumb>
      <Crumb w={48} ml="ml-[8px]">Columns</Crumb>
      <div className="ml-[4px] flex h-[20px] w-[107px] items-center bg-[#9ab2de] pl-[4px] text-[#333]">
        <T w={84}>Precast Column</T>
        <span className="ml-[9px]"><Arrow className="text-[#666]" /></span>
      </div>
      <T w={25} className="ml-auto mt-px">10 m</T>
      <T w={29} className="ml-[30px] mt-px">0.00 s</T>
      <T w={6} className="ml-[30px] mt-px">0</T>
      <svg width="9" height="9" viewBox="0 0 10 10" className="ml-[4px] mr-[8px] mt-px"><path d="M5 0l1.300 3.600H10L7 6l1.100 4L5 7.700 1.900 10 3 6 0 3.600h3.700z" fill="#fff" /></svg>
    </div>
  );
}

const apps: { line?: string; active?: boolean; icon: ReactNode }[] = [
  { icon: <path d="M0 2.300l6.500-1v6.200H0zM7.500 1.100L16 0v7.500H7.500zM0 8.500h6.500v6.200L0 13.700zM7.500 8.500H16V16l-8.500-1.100z" fill="#fff" /> },
  { icon: <g fill="none" stroke="#fff" strokeWidth="1.400"><circle cx="10" cy="6" r="5.200" /><path d="M6 10L0 16" /></g> },
  {
    line: 'w-[28px]', icon: (
      <g><circle cx="8" cy="8" r="8" fill="#fbc116" /><path d="M8 8L1.100 4A8 8 0 0 1 15 4z" fill="#e33b2e" /><path d="M8 8L1.100 4A8 8 0 0 0 7 16l4-6z" fill="#2da94f" /><path d="M8 4.500h7.200L15 4A8 8 0 0 0 1.100 4L4.500 9z" fill="#e33b2e" /><circle cx="8" cy="8" r="4" fill="#fff" /><circle cx="8" cy="8" r="3" fill="#3f7fee" /></g>
    ),
  },
  { icon: <g><ellipse cx="7" cy="6" rx="7" ry="5" fill="#f1f1f1" /><path d="M1 7c2-5 8-7 13-4L8 9z" fill="#d94b4b" opacity=".8" /><ellipse cx="6" cy="6" rx="4" ry="2" fill="#fff" /><circle cx="9" cy="14" r="1.800" fill="none" stroke="#39a0e8" strokeWidth="1.300" /><circle cx="14.500" cy="11" r="1.500" fill="none" stroke="#39a0e8" strokeWidth="1.300" /><path d="M9 12V7M13 11L8 10" stroke="#ddd" /></g> },
  { line: 'w-[28px]', icon: <g><path d="M12 0l4 2v12l-4 2L0 6.500 2 4.500l10 7.500V4L2 11.500 0 9.500z" fill="#2489ca" /><path d="M12 0l4 2v12l-4 2z" fill="#39a5f0" /></g> },
  { icon: <g><circle cx="8" cy="8" r="8" fill="#1b4f86" /><circle cx="11" cy="5.500" r="3.500" fill="#fff" /><circle cx="11" cy="5.500" r="2" fill="#1b4f86" /><path d="M0 8l6 3 4-3" fill="none" stroke="#fff" strokeWidth="2.600" /><circle cx="5.500" cy="11.500" r="2" fill="#fff" /></g> },
  { icon: <g fill="none" stroke="#fff" strokeWidth="1.200"><path d="M4 0C1 0 2 3 2 5S0 7 0 8s2 1 2 3-1 5 2 5M12 0c3 0 2 3 2 5s2 2 2 3-2 1-2 3 1 5-2 5M6 1C4 2 5 4 5 7M10 1c2 1 1 3 1 6M5 9h6v3H5zM8 9v3" /></g> },
  { icon: <text x="1" y="13" fontSize="14" fill="#5e2318" fontFamily="Liberation Sans, sans-serif" textLength="14">VI</text> },
  { line: 'w-[28px]', icon: <g><path d="M0 1h6l1.500 2H16v3H0z" fill="#e5a52a" /><path d="M0 4h16v11H0z" fill="#ffd767" /><path d="M3 15V9h10v6h-3v-3H6v3z" fill="#3f8fd8" /></g> },
  { line: 'w-[28px]', icon: <g><rect y="2" width="16" height="12" fill="#bfe3f8" stroke="#2d8ccd" /><circle cx="5" cy="7" r="3" fill="#f2b234" /><path d="M5 4v3h3a3 3 0 0 0-3-3" fill="#2d6fb5" /><path d="M10 6h5M10 8h5M2 12h12" stroke="#2d6fb5" strokeWidth="1.200" /></g> },
  { line: 'w-[28px]', icon: <g><rect x="0" y="5" width="4" height="10" fill="#cfd3d6" /><rect x="4.500" y="1.500" width="11" height="9" fill="#d9edf7" stroke="#aeb4b8" /><path d="M5 7l3-2 3 3 4-4" fill="none" stroke="#2884b8" strokeWidth="1.300" /><path d="M8 11h4v3h3v1H5v-1h3z" fill="#b9bdc0" /></g> },
  { line: 'w-[28px]', icon: <g><rect width="16" height="16" fill="#eef5fc" /><path d="M2 3h3v2h3V3h6v3l-2 1-2 5-4 1 1-3-3 1 1-4-3-1z" fill="#1c5a9c" /></g> },
  { line: 'w-[36px]', active: true, icon: <g><rect width="16" height="16" rx="2.500" fill="#e9fbfc" /><path d="M2.500 6c2-3 9-3 11 0-2 3-9 3-11 0z" fill="none" stroke="#35bcc8" strokeWidth="1.200" /><circle cx="8" cy="6" r="1.500" fill="#35bcc8" /><path d="M2 11.500h12" stroke="#67cdd5" strokeWidth="1.600" /></g> },
];

const tray: ReactNode[] = [
  <g><rect width="16" height="16" rx="2.500" fill="#fff" /><path d="M6 3h4l4 7h-4z" fill="#fbc116" /><path d="M6 3l2 3.500L4 13l-2-3z" fill="#1fa463" /><path d="M6 10h8l-2 3H4z" fill="#4285f4" /></g>,
  <g><circle cx="5" cy="4" r="3" fill="none" stroke="#eee" strokeWidth="2" /><path d="M4 6v9M4 12h3" stroke="#eee" strokeWidth="2" /><rect x="6" y="8" width="9" height="7" rx="1" fill="#d22" /><path d="M8 8c0-4 5-4 5 0" fill="none" stroke="#d22" strokeWidth="1.500" /><path d="M8.500 10h4v3h-4z" fill="#fff" /></g>,
  <path d="M4 1l4 2.500L4 6 0 3.500zM12 1l4 2.500L12 6 8 3.500zM4 6l4 2.500L4 11 0 8.500zM12 6l4 2.500-4 2.500-4-2.500zM8 10l4 2-4 3-4-3z" fill="#fff" />,
  <g><rect x="2" y="2" width="12" height="12" fill="#3f4750" stroke="#ddd" /><path d="M2 9h12v5H2z" fill="#4fb4f2" /></g>,
  <g><rect width="16" height="16" fill="#111" /><path d="M3 8c1.500-3.500 5-4 7-1-1.500 3.500-5 4-7 1z" fill="none" stroke="#76b900" /><path d="M8 4h6v8H8v-1.500c2 0 3-1.500 4-2.500-1-2-2-2.500-4-2.500z" fill="#76b900" /><circle cx="7" cy="7.500" r="1.200" fill="#76b900" /></g>,
  <g strokeWidth="2.200"><path d="M0 4h7M3.500.5v7M10.500 9.500l5 5M15.500 9.500l-5 5" stroke="#1313ff" /><path d="M9 4h7M1 15l5-6" stroke="#f11" /></g>,
  <g><path d="M2 5h3l1-1h4l1 1h3l2 7h-2l-3-2H5l-3 2H0z" fill="#33383e" /><path d="M4 7h2M5 6v2M10.500 7h2" stroke="#565b62" /></g>,
  <g><rect width="16" height="16" fill="#141414" /><path d="M6 3l3 5-3 5" fill="none" stroke="#e08128" strokeWidth="2.400" /></g>,
  <g fill="none" stroke="#fff" strokeWidth="1.600"><path d="M1 13c0-7 7-11 14-10-1 6-6 8-11 6.500" /><path d="M3 9c4-.5 7-1.500 9-4" /></g>,
  <g><path d="M8 0l7 2c0 7-2 11-7 14C3 13 1 9 1 2z" fill="#fff" /><path d="M8 0v16M1 7h14" stroke="#191d22" /><path d="M10.500 7l5.500 9H5z" fill="#f5b71f" /><path d="M10.500 10v3M10.500 14v1" stroke="#111" /></g>,
  <g fill="none" stroke="#fff"><path d="M5 3.500h11v8H4M8 14.500h6M10.500 12v2.500M.5 1.500h4v4h-4zM2.500 6v9" /></g>,
  <g fill="none" stroke="#fff" strokeWidth="1.100"><path d="M0 6h3l3-3v10l-3-3H0zM8 6c1 1 1 3 0 4M10.500 4c2 2 2 6 0 8M13 2c3 3 3 9 0 12" /></g>,
];

function Taskbar() {
  return (
    <div className="flex h-[30px] shrink-0 bg-[#191e25] text-[12px] text-white">
      {apps.map((a, i) => (
        <div key={i} className={`flex w-[37px] flex-col items-center pt-[7px] ${a.active ? 'bg-[#41474d]' : ''}`}>
          <svg width="16" height="16" viewBox="0 0 16 16" className="-ml-px overflow-visible">{a.icon}</svg>
          {a.line && <div className={`mt-auto h-[2px] bg-[#9fd4f2] ${a.line}`} />}
        </div>
      ))}
      <div className="ml-auto flex items-center">
        <T w={14} className="mb-[5px] mr-[8px]">EN</T>
        <svg width="16" height="14" viewBox="0 0 16 14" className="mb-[3px] mr-[26px]"><rect x=".5" y="5.500" width="15" height="8" rx="1" fill="#c8c8c8" /><path d="M2 8h12M2 10h12M4 12h8" stroke="#444" strokeDasharray="1 1" /><path d="M7 5c0-4 4 0 6-4" fill="none" stroke="#bbb" /></svg>
        {tray.map((t, i) => (
          <svg key={i} width="16" height="16" viewBox="0 0 16 16" className="mr-[8px] shrink-0 overflow-visible">{t}</svg>
        ))}
        <T w={23} className="ml-[2px]">ENG</T>
        <T w={27} className="ml-[13px]">21:57</T>
        <svg width="17" height="17" viewBox="0 0 17 17" className="ml-[18px]"><path d="M.8 1.500h15.400v11h-5L8.500 15.500l-2.700-3h-5z" fill="none" stroke="#fff" strokeWidth="1.200" /></svg>
        <div className="ml-[19px] mr-[4px] h-[30px] w-px bg-[#5a5f66]" />
      </div>
    </div>
  );
}

const Dot = () => <span className="h-[2px] w-[2px] bg-[#bdbdbd]" />;

export default function App() {
  return (
    <div className="flex h-[1080px] w-[1920px] flex-col overflow-hidden bg-white font-['Open_Sans','Noto_Sans',sans-serif] text-[12px] text-[#262626]">
      <div className="bg-[#f4f4f4]"><TitleBar /><Tabs /></div>
      <Ribbon />
      <div className="flex h-[28px] items-center border-b border-t border-[#bdbdbd] bg-[#fcf4ab] font-['Noto_Sans',sans-serif] text-black">
        <svg width="16" height="16" viewBox="0 0 16 16" className="ml-[10px]">
          <circle cx="8" cy="8" r="7.300" fill="#5f8ed0" stroke="#8a9dbd" /><path d="M7 7h2v5M6 12h5" stroke="#fff" strokeWidth="1.600" fill="none" /><circle cx="8" cy="4" r="1.200" fill="#fff" />
        </svg>
        <T w={217} className="ml-[9px] mt-[2px]">New version of application is available</T>
        <T w={40} className="ml-[31px] mt-[2px]">Update</T>
      </div>
      <div className="flex h-[844px] shrink-0">
        <div className="relative w-[1350px] shrink-0 overflow-hidden bg-white">
          <Scene />
          <div className="absolute right-px top-[411px] flex flex-col gap-[3px]"><Dot /><Dot /><Dot /><Dot /></div>
        </div>
        <div className="w-[570px] font-['Noto_Sans',sans-serif] text-[11px] text-black">
          <Structure />
          <div className="flex h-[3px] items-end justify-center gap-[2px] pr-[4px]"><Dot /><Dot /><Dot /><Dot /><Dot /></div>
          <Properties />
        </div>
      </div>
      <StatusBar />
      <Taskbar />
    </div>
  );
}
